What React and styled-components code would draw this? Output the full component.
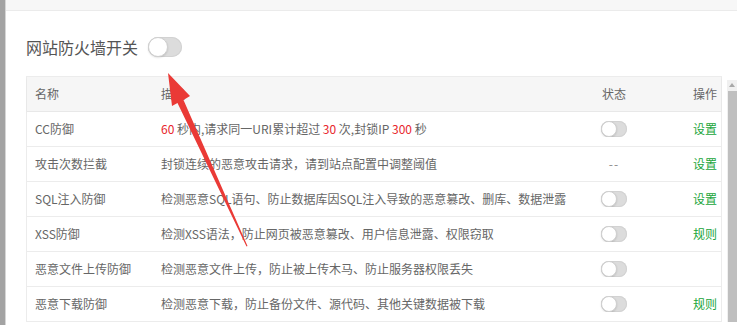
import React from 'react'
import styled, { createGlobalStyle } from 'styled-components'

const GlobalStyle = createGlobalStyle`
  html, body {
    margin: 0;
    padding: 0;
    background: #fff;
    font-family: "Noto Sans CJK SC", "Noto Sans", "Liberation Sans", sans-serif;
    overflow: hidden;
  }
`

const rules = [
  { name: 'CC防御', desc: 'cc', status: 'switch', action: '设置' },
  { name: '攻击次数拦截', desc: '封锁连续的恶意攻击请求，请到站点配置中调整阈值', status: 'dash', action: '设置' },
  { name: 'SQL注入防御', desc: '检测恶意SQL语句、防止数据库因SQL注入导致的恶意篡改、删库、数据泄露', status: 'switch', action: '设置' },
  { name: 'XSS防御', desc: '检测XSS语法，防止网页被恶意篡改、用户信息泄露、权限窃取', status: 'switch', action: '规则' },
  { name: '恶意文件上传防御', desc: '检测恶意文件上传，防止被上传木马、防止服务器权限丢失', status: 'switch', action: '' },
  { name: '恶意下载防御', desc: '检测恶意下载，防止备份文件、源代码、其他关键数据被下载', status: 'switch', action: '规则' },
]

const Page = styled.div`
  position: relative;
  display: flex;
  width: 737px;
  height: 325px;
  overflow: hidden;
`

const LeftStrip = styled.div`
  width: 5px;
  flex-shrink: 0;
  background: #a3a3a3;
  border-right: 1px solid #d6d6d6;
`

const Panel = styled.div`
  flex: 1;
  display: flex;
  flex-direction: column;
  min-height: 0;
`

const TopBand = styled.div`
  height: 10px;
  flex-shrink: 0;
  background: #f7f7f7;
  border-bottom: 1px solid #ebebeb;
`

const Body = styled.div`
  flex-shrink: 0;
  padding-left: 20px;
  padding-top: 26px;
`

const TitleRow = styled.div`
  display: flex;
  align-items: center;
  gap: 10px;
  height: 20px;
`

const Title = styled.span`
  font-size: 16px;
  line-height: 20px;
  color: #555;
`

const Track = styled.span`
  position: relative;
  display: inline-block;
  box-sizing: border-box;
  width: ${p => (p.$small ? 26 : 34)}px;
  height: ${p => (p.$small ? 16 : 20)}px;
  border-radius: 10px;
  background: #dcdcdc;
  box-shadow: inset 0 0 0 1px #d2d2d2;
  vertical-align: middle;
`

const Knob = styled.span`
  position: absolute;
  left: 0;
  top: 0;
  box-sizing: border-box;
  width: ${p => (p.$small ? 16 : 20)}px;
  height: ${p => (p.$small ? 16 : 20)}px;
  border-radius: 50%;
  background: #fff;
  border: 1px solid #cfcfcf;
  box-shadow: 0 1px 2px rgba(0, 0, 0, 0.12);
`

const Toggle = ({ small }) => (
  <Track $small={small}>
    <Knob $small={small} />
  </Track>
)

const TableArea = styled.div`
  display: flex;
  gap: 5px;
  margin-top: 19px;
`

const Table = styled.div`
  width: 696px;
  border: 1px solid #ececec;
  border-bottom: none;
  box-sizing: border-box;
`

const Row = styled.div`
  display: grid;
  grid-template-columns: 126px 1fr 80px 67px;
  align-items: center;
  height: 35px;
  box-sizing: border-box;
  font-size: 12px;
  line-height: 16px;
  color: #666;
  background: ${p => (p.$head ? '#f6f6f6' : '#fff')};
  border-bottom: 1px solid ${p => (p.$head ? '#e8e8e8' : '#ececec')};
  box-shadow: ${p => (p.$head ? '0 1px 2px rgba(0,0,0,0.05)' : 'none')};
`

const Cell = styled.div`
  display: flex;
  align-items: center;
  justify-content: ${p => (p.$align === 'center' ? 'center' : p.$align === 'right' ? 'flex-end' : 'flex-start')};
  padding: 0 ${p => (p.$align === 'right' ? 4 : 8)}px 0 8px;
  white-space: pre;
  overflow: hidden;
`

const Red = styled.span`
  color: #e8262c;
`

const Action = styled.a`
  color: #20a53a;
  text-decoration: none;
`

const Dash = styled.span`
  color: #888;
  letter-spacing: 1px;
`

const Scrollbar = styled.div`
  width: 10px;
  margin-top: 4px;
  display: flex;
  flex-direction: column;
  align-items: center;
  background: #f0f0f0;
`

const ScrollArrow = styled.div`
  width: 0;
  height: 0;
  margin-top: 3px;
  border-left: 3px solid transparent;
  border-right: 3px solid transparent;
  border-bottom: 4px solid #a8a8a8;
`

const Thumb = styled.div`
  width: 9px;
  flex: 1;
  margin-top: 4px;
  background: #bfbfbf;
`

const ArrowLayer = styled.svg`
  position: absolute;
  left: 0;
  top: 0;
  pointer-events: none;
`

const ccDesc = (
  <span>
    <Red>60</Red> 秒内,请求同一URI累计超过 <Red>30</Red> 次,封锁IP <Red>300</Red> 秒
  </span>
)

const App = () => (
  <>
    <GlobalStyle />
    <Page>
      <LeftStrip />
      <Panel>
        <TopBand />
        <Body>
          <TitleRow>
            <Title>网站防火墙开关</Title>
            <Toggle />
          </TitleRow>
          <TableArea>
            <Table>
              <Row $head>
                <Cell>名称</Cell>
                <Cell>描述</Cell>
                <Cell $align="center">状态</Cell>
                <Cell $align="right">操作</Cell>
              </Row>
              {rules.map(r => (
                <Row key={r.name}>
                  <Cell>{r.name}</Cell>
                  <Cell>{r.desc === 'cc' ? ccDesc : r.desc}</Cell>
                  <Cell $align="center">
                    {r.status === 'dash' ? <Dash>--</Dash> : <Toggle small />}
                  </Cell>
                  <Cell $align="right">
                    {r.action && <Action href="#">{r.action}</Action>}
                  </Cell>
                </Row>
              ))}
            </Table>
            <Scrollbar>
              <ScrollArrow />
              <Thumb />
            </Scrollbar>
          </TableArea>
        </Body>
      </Panel>
      <ArrowLayer width="737" height="325" viewBox="0 0 737 325">
        <polygon
          points="168,73 190,96 183.5,100 247.5,246 246.5,246.5 177.5,103 172,106"
          fill="#ea3a36"
        />
      </ArrowLayer>
    </Page>
  </>
)

export default App
